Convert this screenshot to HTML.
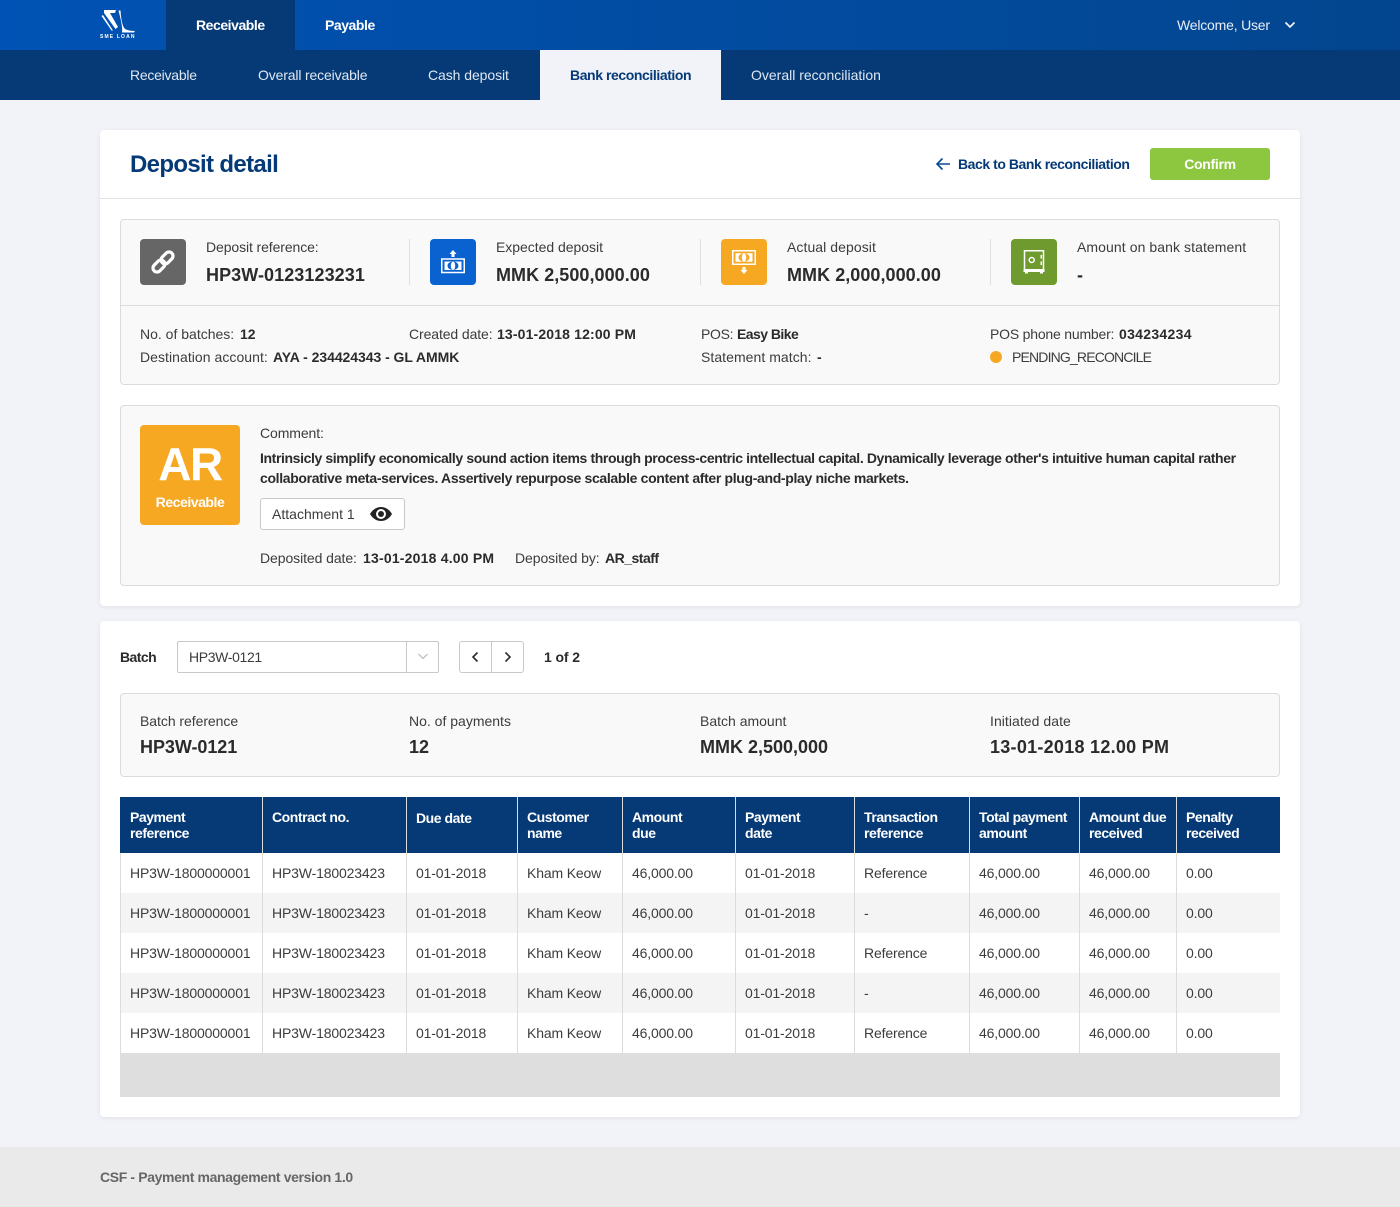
<!DOCTYPE html>
<html><head><meta charset="utf-8"><title>Deposit detail</title>
<style>
*{box-sizing:border-box}
html,body{margin:0;padding:0}
body{width:1400px;height:1207px;position:relative;overflow:hidden;background:#f1f3f9;font-family:"Liberation Sans",Arial,sans-serif;font-size:14px;color:#3c3c3c;letter-spacing:0}
.a{position:absolute}
.t{position:absolute;white-space:nowrap;line-height:20px;height:20px}
b,.b{font-weight:bold;color:#2b2b2b}
.big{font-size:18px;font-weight:bold;color:#2b2b2b;line-height:24px;height:24px;letter-spacing:.05px}
.box{position:absolute;background:#f9f9f9;border:1px solid #dcdcdc;border-radius:4px}
.card{position:absolute;background:#fff;border-radius:4px;box-shadow:0 1px 4px rgba(0,0,0,.08)}
.ic{position:absolute;width:46px;height:46px;border-radius:4px}
table{position:absolute;left:120px;top:797px;width:1160px;border-collapse:separate;border-spacing:0;table-layout:fixed;letter-spacing:-.15px}
th{background:#053a77;color:#fff;font-weight:bold;text-align:left;padding:12px 0 0 9px;height:56px;vertical-align:top;line-height:16px;border-left:1px solid #dcdcdc;letter-spacing:-.45px}
th:first-child{border-left:1px solid #053a77}
td{height:40px;padding:0 0 0 9px;border-left:1px solid #dcdcdc;white-space:nowrap;color:#3c3c3c}
tr.e td{background:#f4f4f4}
</style></head><body>
<div class="a" style="left:0;top:0;width:1400px;height:50px;background:linear-gradient(90deg,#0052b4,#03468f)"></div>
<div class="a" style="left:0;top:50px;width:1400px;height:50px;background:#053a77"></div>
<div class="a" style="left:166px;top:0;width:129px;height:50px;background:#053a77"></div>
<svg class="a" style="left:98px;top:8px" width="40" height="26" viewBox="0 0 40 26"><path d="M6 2H18L17 5H12L20 19L17.500 21L6 5Z" fill="#fff"/><path d="M3.500 8L5 7L15 22.500H13.500Z" fill="#fff"/><path d="M20.500 2.500H22.500C23 10 24 17 26.500 20.500C29 22.500 33 22.800 37 23L36 24.500H24C25 20 22 8 20.500 2.500Z" fill="#fff"/></svg>
<div class="t" style="left:100px;top:32px;font-size:5px;font-weight:bold;color:#fff;line-height:10px;height:10px;letter-spacing:1.15px">SME LOAN</div>
<div class="t" style="left:196px;top:15px;color:#fff;font-weight:bold;letter-spacing:-.45px">Receivable</div>
<div class="t" style="left:325px;top:15px;color:#fff;font-weight:bold;letter-spacing:-.45px">Payable</div>
<div class="t" style="left:1177px;top:15px;color:#e6edf6;letter-spacing:-.2px">Welcome, User</div>
<svg class="a" style="left:1284px;top:20px" width="12" height="10" viewBox="0 0 12 10"><path d="M1.500 2.500L6 7L10.500 2.500" fill="none" stroke="#fff" stroke-width="1.600"/></svg>
<div class="t" style="left:130px;top:65px;color:#dfe7f1;letter-spacing:-.25px">Receivable</div>
<div class="t" style="left:258px;top:65px;color:#dfe7f1;letter-spacing:-.15px">Overall receivable</div>
<div class="t" style="left:428px;top:65px;color:#dfe7f1;letter-spacing:-.07px">Cash deposit</div>
<div class="a" style="left:540px;top:50px;width:181px;height:50px;background:#f1f3f9"></div>
<div class="t" style="left:570px;top:65px;color:#053a77;font-weight:bold;letter-spacing:-.42px">Bank reconciliation</div>
<div class="t" style="left:751px;top:65px;color:#dfe7f1">Overall reconciliation</div>

<div class="card" style="left:100px;top:130px;width:1200px;height:476px"></div>
<div class="a" style="left:100px;top:198px;width:1200px;height:1px;background:#e3e3e3"></div>
<div class="t" style="left:130px;top:150px;font-size:24px;font-weight:bold;color:#053a77;line-height:30px;height:30px;letter-spacing:-.66px">Deposit detail</div>
<svg class="a" style="left:935px;top:157px" width="16" height="14" viewBox="0 0 16 14"><path d="M15 7H2M7.500 1.500L2 7L7.500 12.500" fill="none" stroke="#0a4a94" stroke-width="1.600"/></svg>
<div class="t" style="left:958px;top:154px;color:#053a77;font-weight:bold;letter-spacing:-.45px">Back to Bank reconciliation</div>
<div class="a" style="left:1150px;top:148px;width:120px;height:32px;background:#8dc63f;border-radius:3px;color:#fff;font-weight:bold;text-align:center;line-height:32px;letter-spacing:-.3px">Confirm</div>

<div class="box" style="left:120px;top:219px;width:1160px;height:166px"></div>
<div class="a" style="left:121px;top:305px;width:1158px;height:1px;background:#dcdcdc"></div>
<div class="ic" style="left:140px;top:239px;background:#666"><svg width="46" height="46" viewBox="0 0 46 46"><g fill="none" stroke="#fff" stroke-width="3.200" transform="rotate(-45 23 23)"><rect x="10.500" y="19" width="13.500" height="8" rx="4"/><rect x="22" y="19" width="13.500" height="8" rx="4"/></g></svg></div>
<div class="t" style="left:206px;top:237px;letter-spacing:-.1px">Deposit reference:</div>
<div class="t big" style="left:206px;top:263px;letter-spacing:.08px">HP3W-0123123231</div>
<div class="a" style="left:409px;top:239px;width:1px;height:46px;background:#e0e0e0"></div>
<div class="ic" style="left:430px;top:239px;background:#0a62d0"><svg width="46" height="46" viewBox="0 0 46 46"><path d="M23 11L26.500 15H24.500V18H21.500V15H19.500Z" fill="#fff"/><rect x="11.750" y="20" width="22.500" height="13.500" fill="none" stroke="#fff" stroke-width="1.500"/><rect x="14.500" y="22.500" width="17" height="8.500" fill="#fff"/><ellipse cx="23" cy="26.750" rx="5.500" ry="4.250" fill="#0a62d0"/><ellipse cx="23" cy="26.750" rx="2.200" ry="4.250" fill="#fff"/></svg></div>
<div class="t" style="left:496px;top:237px;letter-spacing:-.03px">Expected deposit</div>
<div class="t big" style="left:496px;top:263px;letter-spacing:.05px">MMK 2,500,000.00</div>
<div class="a" style="left:700px;top:239px;width:1px;height:46px;background:#e0e0e0"></div>
<div class="ic" style="left:721px;top:239px;background:#f7a823"><svg width="46" height="46" viewBox="0 0 46 46"><rect x="11.750" y="11.750" width="22.500" height="13.500" fill="none" stroke="#fff" stroke-width="1.500"/><rect x="14.500" y="14.250" width="17" height="8.500" fill="#fff"/><ellipse cx="23" cy="18.500" rx="5.500" ry="4.250" fill="#f7a823"/><ellipse cx="23" cy="18.500" rx="2.200" ry="4.250" fill="#fff"/><path d="M23 35L26.500 31H24.500V28H21.500V31H19.500Z" fill="#fff"/></svg></div>
<div class="t" style="left:787px;top:237px;letter-spacing:.07px">Actual deposit</div>
<div class="t big" style="left:787px;top:263px;letter-spacing:.05px">MMK 2,000,000.00</div>
<div class="a" style="left:990px;top:239px;width:1px;height:46px;background:#e0e0e0"></div>
<div class="ic" style="left:1011px;top:239px;background:#6f9a2e"><svg width="46" height="46" viewBox="0 0 46 46"><path d="M13.500 11.750H32.500V31H13.500Z" fill="none" stroke="#fff" stroke-width="1.500"/><rect x="12.500" y="30" width="21" height="3" fill="#fff"/><rect x="14" y="33" width="3" height="1.500" fill="#fff"/><rect x="29" y="33" width="3" height="1.500" fill="#fff"/><rect x="29.500" y="16" width="1.500" height="10" fill="#fff"/><rect x="29.500" y="19.500" width="1.500" height="3" fill="#6f9a2e"/><circle cx="20.700" cy="21" r="2.500" fill="none" stroke="#fff" stroke-width="1.500"/></svg></div>
<div class="t" style="left:1077px;top:237px;letter-spacing:.08px">Amount on bank statement</div>
<div class="t big" style="left:1077px;top:263px">-</div>

<div class="t" style="left:140px;top:324px">No. of batches:</div><div class="t b" style="left:240px;top:324px">12</div>
<div class="t" style="left:409px;top:324px;letter-spacing:-.1px">Created date:</div><div class="t b" style="left:497px;top:324px;letter-spacing:.15px">13-01-2018 12:00 PM</div>
<div class="t" style="left:701px;top:324px;letter-spacing:-.3px">POS:</div><div class="t b" style="left:737px;top:324px;letter-spacing:-.55px">Easy Bike</div>
<div class="t" style="left:990px;top:324px;letter-spacing:-.2px">POS phone number:</div><div class="t b" style="left:1119px;top:324px;letter-spacing:.3px">034234234</div>
<div class="t" style="left:140px;top:347px;letter-spacing:.05px">Destination account:</div><div class="t b" style="left:273px;top:347px;letter-spacing:-.05px">AYA - 234424343 - GL AMMK</div>
<div class="t" style="left:701px;top:347px;letter-spacing:.05px">Statement match:</div><div class="t b" style="left:817px;top:347px">-</div>
<div class="a" style="left:990px;top:351px;width:12px;height:12px;border-radius:50%;background:#f7a823"></div>
<div class="t" style="left:1012px;top:347px;letter-spacing:-.83px">PENDING_RECONCILE</div>

<div class="box" style="left:120px;top:405px;width:1160px;height:181px"></div>
<div class="a" style="left:140px;top:425px;width:100px;height:100px;background:#f7a823;border-radius:4px"></div>
<div class="t" style="left:140px;top:436px;width:100px;text-align:center;color:#fff;font-size:46px;font-weight:bold;line-height:56px;height:56px;letter-spacing:-1.5px">AR</div>
<div class="t" style="left:140px;top:492px;width:100px;text-align:center;color:#fff;font-weight:bold;letter-spacing:-.45px">Receivable</div>
<div class="t" style="left:260px;top:423px;letter-spacing:-.1px">Comment:</div>
<div class="t b" style="left:260px;top:448px;letter-spacing:-.385px">Intrinsicly simplify economically sound action items through process-centric intellectual capital. Dynamically leverage other's intuitive human capital rather</div>
<div class="t b" style="left:260px;top:468px;letter-spacing:-.34px">collaborative meta-services. Assertively repurpose scalable content after plug-and-play niche markets.</div>
<div class="a" style="left:260px;top:498px;width:145px;height:32px;background:#fff;border:1px solid #c8c8c8;border-radius:3px"></div>
<div class="t" style="left:272px;top:504px;letter-spacing:.02px">Attachment 1</div>
<svg class="a" style="left:369px;top:505px" width="24" height="18" viewBox="0 0 24 18"><path d="M1 9C4 4 8 2 12 2S20 4 23 9C20 14 16 16 12 16S4 14 1 9Z" fill="#222"/><circle cx="12" cy="9" r="5" fill="#fff"/><circle cx="12" cy="9" r="3" fill="#222"/></svg>
<div class="t" style="left:260px;top:548px;letter-spacing:-.08px">Deposited date:</div><div class="t b" style="left:363px;top:548px;letter-spacing:.2px">13-01-2018 4.00 PM</div>
<div class="t" style="left:515px;top:548px;letter-spacing:-.08px">Deposited by:</div><div class="t b" style="left:605px;top:548px;letter-spacing:-.5px">AR_staff</div>

<div class="card" style="left:100px;top:621px;width:1200px;height:496px"></div>
<div class="t b" style="left:120px;top:647px;letter-spacing:-.55px">Batch</div>
<div class="a" style="left:177px;top:641px;width:262px;height:32px;background:#fff;border:1px solid #c8c8c8;border-radius:2px"></div>
<div class="a" style="left:406px;top:642px;width:1px;height:30px;background:#c8c8c8"></div>
<div class="t" style="left:189px;top:647px;letter-spacing:-.35px">HP3W-0121</div>
<svg class="a" style="left:416px;top:652px" width="14" height="10" viewBox="0 0 14 10"><path d="M2.500 2L7 6.500L11.500 2" fill="none" stroke="#c4c4c4" stroke-width="1.400"/></svg>
<div class="a" style="left:459px;top:641px;width:65px;height:32px;background:#fff;border:1px solid #c8c8c8;border-radius:3px"></div>
<div class="a" style="left:491px;top:642px;width:1px;height:30px;background:#c8c8c8"></div>
<svg class="a" style="left:470px;top:651px" width="10" height="12" viewBox="0 0 10 12"><path d="M7.500 1.500L3 6L7.500 10.500" fill="none" stroke="#2b2b2b" stroke-width="1.600"/></svg>
<svg class="a" style="left:503px;top:651px" width="10" height="12" viewBox="0 0 10 12"><path d="M2.500 1.500L7 6L2.500 10.500" fill="none" stroke="#2b2b2b" stroke-width="1.600"/></svg>
<div class="t b" style="left:544px;top:647px;letter-spacing:-.1px">1 of 2</div>

<div class="box" style="left:120px;top:693px;width:1160px;height:84px"></div>
<div class="t" style="left:140px;top:711px;letter-spacing:-.05px">Batch reference</div>
<div class="t big" style="left:140px;top:735px;letter-spacing:-.05px">HP3W-0121</div>
<div class="t" style="left:409px;top:711px">No. of payments</div>
<div class="t big" style="left:409px;top:735px">12</div>
<div class="t" style="left:700px;top:711px">Batch amount</div>
<div class="t big" style="left:700px;top:735px;letter-spacing:0">MMK 2,500,000</div>
<div class="t" style="left:990px;top:711px;letter-spacing:.05px">Initiated date</div>
<div class="t big" style="left:990px;top:735px;letter-spacing:.27px">13-01-2018 12.00 PM</div>

<table>
<colgroup><col style="width:142px"><col style="width:144px"><col style="width:111px"><col style="width:105px"><col style="width:113px"><col style="width:119px"><col style="width:115px"><col style="width:110px"><col style="width:97px"><col style="width:104px"></colgroup>
<tr><th>Payment<br>reference</th><th>Contract no.</th><th style="padding-top:13px">Due date</th><th>Customer<br>name</th><th>Amount<br>due</th><th>Payment<br>date</th><th>Transaction<br>reference</th><th>Total payment<br>amount</th><th>Amount due<br>received</th><th>Penalty<br>received</th></tr>
<tr><td>HP3W-1800000001</td><td>HP3W-180023423</td><td>01-01-2018</td><td>Kham Keow</td><td>46,000.00</td><td>01-01-2018</td><td>Reference</td><td>46,000.00</td><td>46,000.00</td><td>0.00</td></tr>
<tr class="e"><td>HP3W-1800000001</td><td>HP3W-180023423</td><td>01-01-2018</td><td>Kham Keow</td><td>46,000.00</td><td>01-01-2018</td><td>-</td><td>46,000.00</td><td>46,000.00</td><td>0.00</td></tr>
<tr><td>HP3W-1800000001</td><td>HP3W-180023423</td><td>01-01-2018</td><td>Kham Keow</td><td>46,000.00</td><td>01-01-2018</td><td>Reference</td><td>46,000.00</td><td>46,000.00</td><td>0.00</td></tr>
<tr class="e"><td>HP3W-1800000001</td><td>HP3W-180023423</td><td>01-01-2018</td><td>Kham Keow</td><td>46,000.00</td><td>01-01-2018</td><td>-</td><td>46,000.00</td><td>46,000.00</td><td>0.00</td></tr>
<tr><td>HP3W-1800000001</td><td>HP3W-180023423</td><td>01-01-2018</td><td>Kham Keow</td><td>46,000.00</td><td>01-01-2018</td><td>Reference</td><td>46,000.00</td><td>46,000.00</td><td>0.00</td></tr>
</table>
<div class="a" style="left:120px;top:1053px;width:1160px;height:44px;background:#dedede"></div>

<div class="a" style="left:0;top:1147px;width:1400px;height:60px;background:#eaeaea"></div>
<div class="t" style="left:100px;top:1167px;font-weight:bold;color:#666;letter-spacing:-.37px">CSF - Payment management version 1.0</div>
</body></html>
